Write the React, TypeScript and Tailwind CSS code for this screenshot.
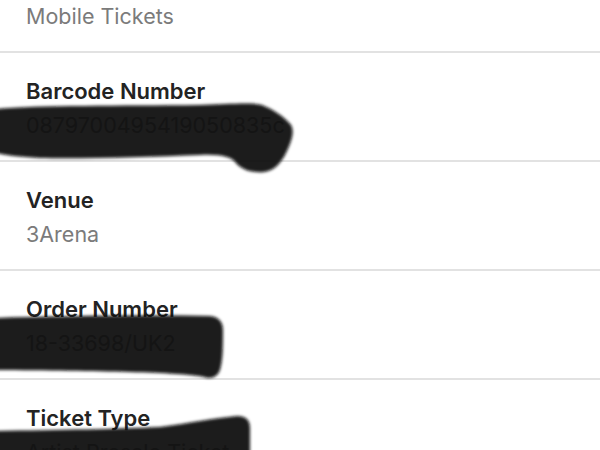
import React from 'react'

const ROWS = [
  { label: 'Mobile Tickets', value: 'Mobile Tickets' },
  { label: 'Barcode Number', value: '0879700495419050835c' },
  { label: 'Venue', value: '3Arena' },
  { label: 'Order Number', value: '18-33698/UK2' },
  { label: 'Ticket Type', value: 'Artist Presale Ticket' },
]

function Row({ label, value, first }: { label: string; value: string; first?: boolean }) {
  return (
    <div
      className={`flex flex-col gap-[6px] pl-[26px] pt-[24px] pb-[21px] border-b-2 border-[#e2e2e2] ${
        first ? '-mt-[56px]' : ''
      }`}
    >
      <div className="text-[22px] leading-[28px] font-semibold text-[#232323]">{label}</div>
      <div className="text-[21.5px] leading-[28px] text-[#7b7b7b]">{value}</div>
    </div>
  )
}

// marker scribbles that hide personal data
function Scribbles() {
  return (
    <svg className="absolute inset-0 pointer-events-none" width="600" height="450" viewBox="0 0 600 450">
      <defs>
        <filter id="soft" x="-5%" y="-20%" width="110%" height="140%">
          <feGaussianBlur stdDeviation="1.8" />
        </filter>
      </defs>
      <g fill="#0b0b0b" fillOpacity="0.94" filter="url(#soft)">
        <path d="M-4,109 C40,105 120,106 200,105 C230,104 252,102 262,105 C272,109 284,116 291,125 C295,132 291,143 286,153 C281,163 274,171 264,172 C252,173 242,170 236,163 C232,157 222,154 200,155 C150,157 80,159 40,158 C20,157 5,155 -4,153 Z" />
        <path d="M-4,318 C60,316 140,315 210,316 C218,317 223,321 223,330 C223,345 223,360 220,370 C217,378 210,379 204,377 C180,372 100,371 -4,370 Z" />
        <path d="M-4,431 C60,430 120,429 160,427 C190,423 215,418 237,416 C246,416 250,420 250,428 L250,454 L-4,454 Z" />
      </g>
    </svg>
  )
}

export default function App() {
  return (
    <div
      className="relative w-[600px] h-[450px] overflow-hidden bg-white"
      style={{ fontFamily: 'Inter, "Noto Sans", sans-serif' }}
    >
      <div className="flex flex-col">
        {ROWS.map((r, i) => (
          <Row key={r.label} label={r.label} value={r.value} first={i === 0} />
        ))}
      </div>
      <Scribbles />
    </div>
  )
}
